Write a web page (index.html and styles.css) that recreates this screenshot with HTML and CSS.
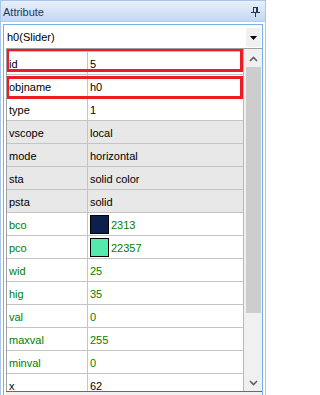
FILE: index.html
```
<!DOCTYPE html>
<html>
<head>
<meta charset="utf-8">
<link rel="stylesheet" href="styles.css">
</head>
<body>
<div class="panel">
  <div class="titlebar">
    <span class="title">Attribute</span>
    <svg class="pin" width="9" height="10" viewBox="0 0 9 10">
      <rect x="2" y="0" width="5" height="1" fill="#1e395b"/>
      <rect x="2" y="0" width="1" height="5" fill="#1e395b"/>
      <rect x="5" y="0" width="2" height="5" fill="#1e395b"/>
      <rect x="0" y="5" width="9" height="1" fill="#1e395b"/>
      <rect x="4" y="6" width="1" height="4" fill="#1e395b"/>
    </svg>
  </div>
  <div class="frame">
    <div class="combo">
      <span class="combo-text">h0(Slider)</span>
      <div class="dropbtn">
        <svg width="7" height="4" viewBox="0 0 7 4"><path d="M0 0h7L3.5 4z" fill="#000"/></svg>
      </div>
    </div>
    <div class="gridwrap">
      <div class="grid">
        <div class="row first"><div class="name">id</div><div class="val">5</div></div>
        <div class="row"><div class="name">objname</div><div class="val">h0</div></div>
        <div class="row"><div class="name">type</div><div class="val">1</div></div>
        <div class="row shade"><div class="name">vscope</div><div class="val">local</div></div>
        <div class="row shade"><div class="name">mode</div><div class="val">horizontal</div></div>
        <div class="row shade"><div class="name">sta</div><div class="val">solid color</div></div>
        <div class="row shade"><div class="name">psta</div><div class="val">solid</div></div>
        <div class="row green"><div class="name">bco</div><div class="val"><span class="swatch swatch-navy"></span>2313</div></div>
        <div class="row green"><div class="name">pco</div><div class="val"><span class="swatch swatch-mint"></span>22357</div></div>
        <div class="row green"><div class="name">wid</div><div class="val">25</div></div>
        <div class="row green"><div class="name">hig</div><div class="val">35</div></div>
        <div class="row green"><div class="name">val</div><div class="val">0</div></div>
        <div class="row green"><div class="name">maxval</div><div class="val">255</div></div>
        <div class="row green"><div class="name">minval</div><div class="val">0</div></div>
        <div class="row"><div class="name">x</div><div class="val">62</div></div>
      </div>
      <div class="scrollbar">
        <div class="sbtn">
          <svg width="9" height="6" viewBox="0 0 9 6"><path d="M1 5L4.5 1.5L8 5" fill="none" stroke="#606060" stroke-width="1.6"/></svg>
        </div>
        <div class="track"><div class="thumb"></div></div>
        <div class="sbtn">
          <svg width="9" height="6" viewBox="0 0 9 6"><path d="M1 1L4.5 4.5L8 1" fill="none" stroke="#606060" stroke-width="1.6"/></svg>
        </div>
      </div>
      <div class="mark mark-id"></div>
      <div class="mark mark-obj"></div>
    </div>
    <div class="desc"></div>
  </div>
</div>
</body>
</html>
```
FILE: styles.css
```
* { box-sizing: border-box; }
html, body { margin: 0; padding: 0; }
body {
  width: 266px;
  height: 395px;
  overflow: hidden;
  background: #ffffff;
  font-family: "Liberation Sans", Arial, sans-serif;
  font-size: 11px;
  color: #000;
}
.panel {
  width: 266px;
  height: 395px;
  display: flex;
  flex-direction: column;
  background: #ffffff;
  border-left: 1px solid #a9c5ea;
  border-right: 1px solid #a9c5ea;
}
.titlebar {
  height: 22px;
  flex: none;
  display: flex;
  align-items: center;
  justify-content: space-between;
  padding: 0 5px 0 2px;
  background: linear-gradient(#e8f0fb, #c3d7f0);
  border-top: 1px solid #a9c5ea;
  border-bottom: 1px solid #b4cdec;
  color: #1e395b;
}
.title { font-size: 11px; padding-top: 1px; }
.pin { display: block; margin-top: 1px; }
.frame {
  flex: 1;
  width: 260px;
  margin: 2px 0 0 2px;
  border: 1px solid #78b0ec;
  border-bottom: none;
  display: flex;
  flex-direction: column;
  min-height: 0;
  overflow: hidden;
  background: #ffffff;
}
.combo {
  height: 22px;
  flex: none;
  display: flex;
  align-items: center;
  background: #ffffff;
}
.combo-text { padding-left: 3px; padding-top: 2px; }
.dropbtn {
  margin-left: auto;
  margin-right: 1px;
  align-self: flex-end;
  width: 15px;
  height: 19px;
  background: #f0f0f0;
  display: flex;
  align-items: center;
  justify-content: center;
}
.dropbtn svg { display: block; margin-top: 1px; }
.gridwrap {
  position: relative;
  flex: 1;
  min-height: 0;
  margin: 1px 0 0 2px;
  display: flex;
  border-left: 1px solid #a0a0a0;
  border-top: 1px solid #a0a0a0;
  overflow: hidden;
}
.grid {
  width: 237px;
  flex: none;
  padding-top: 2px;
  border-right: 1px solid #b8b8b8;
  overflow: hidden;
}
.row {
  display: flex;
  height: 23px;
  border-bottom: 1px solid #c4c4c4;
  background: #ffffff;
}
.row.first { border-top: 1px solid #c4c4c4; height: 24px; }
.row.shade { background: #e8e8e8; }
.name {
  width: 81px;
  flex: none;
  border-right: 1px solid #c4c4c4;
  padding-left: 2px;
  padding-top: 2px;
  display: flex;
  align-items: center;
}
.val {
  flex: 1;
  padding-left: 2px;
  padding-top: 2px;
  display: flex;
  align-items: center;
}
.row.green .name, .row.green .val { color: #008000; }
.swatch {
  width: 19px;
  height: 19px;
  border: 1px solid #000;
  margin-right: 2px;
  margin-top: -2px;
  flex: none;
}
.swatch-navy { background: #0d1f4c; }
.swatch-mint { background: #55eaad; }
.scrollbar {
  width: 18px;
  flex: none;
  background: #f0f0f0;
  display: flex;
  flex-direction: column;
  padding-top: 1px;
}
.sbtn {
  height: 17px;
  flex: none;
  display: flex;
  align-items: center;
  justify-content: center;
}
.sbtn svg { display: block; margin-left: 1px; }
.track {
  flex: 1;
  padding: 0 1px 0 2px;
}
.thumb {
  height: 246px;
  background: #cdcdcd;
}
.mark {
  position: absolute;
  left: -1px;
  width: 237px;
  border: 3px solid #ed1c24;
}
.mark-id { top: -1px; height: 24px; }
.mark-obj { top: 27px; height: 23px; }
.desc {
  height: 4px;
  flex: none;
  margin-left: 2px;
  border-top: 1px solid #6a6a6a;
  background: #f0f0f0;
}
```
